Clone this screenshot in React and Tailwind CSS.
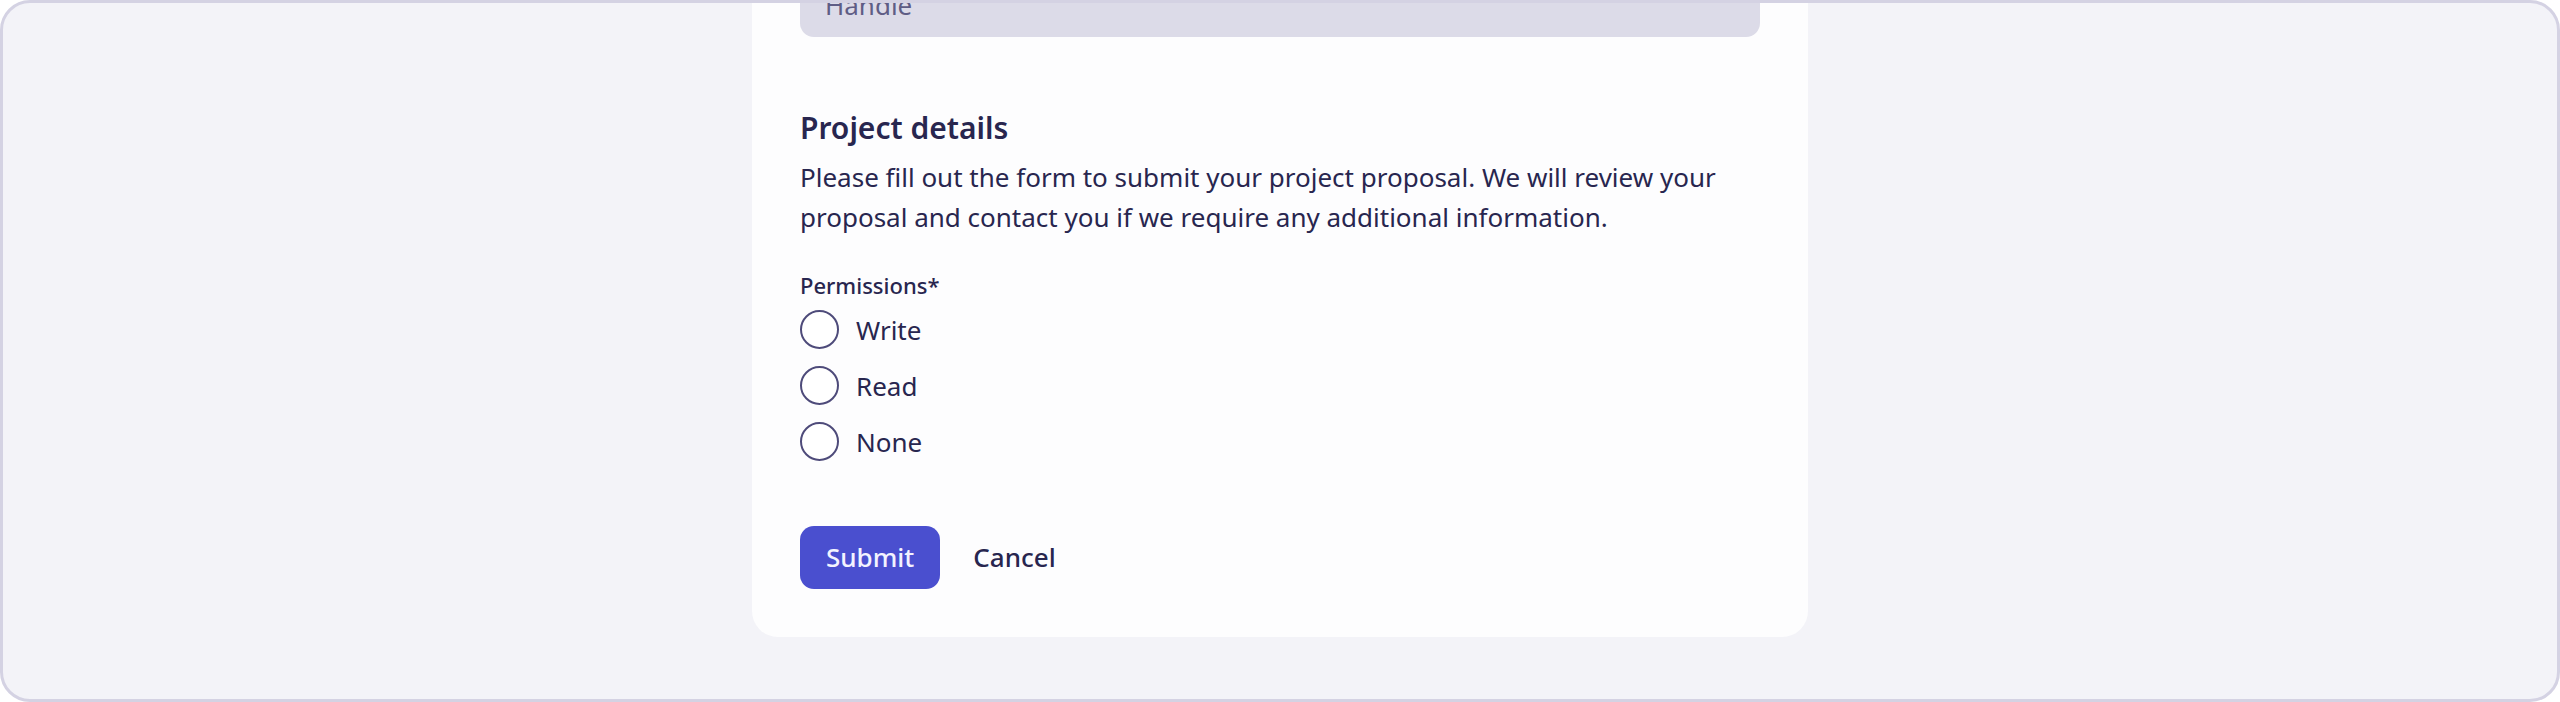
import React, { useState } from "react";

const options = ["Write", "Read", "None"];

function Radio({ label, checked, onChange }) {
  return (
    <label className="flex items-center gap-[17px] cursor-pointer h-[39px]">
      <span className="w-[39px] h-[39px] rounded-full border-2 border-[#4e4b7a] flex items-center justify-center bg-white">
        {checked && <span className="w-[19px] h-[19px] rounded-full bg-[#4a4fcf]" />}
      </span>
      <input type="radio" className="hidden" checked={checked} onChange={onChange} />
      <span className="text-[26px] leading-[40px] text-[#28264f]">{label}</span>
    </label>
  );
}

export default function App() {
  const [perm, setPerm] = useState("");

  return (
    <div
      className="w-full h-[702px] bg-[#f3f3f8] border-[3px] border-[#d4d2e3] rounded-[30px] overflow-hidden flex flex-col items-center justify-end pb-[62px]"
      style={{ fontFamily: '"Noto Sans", "Open Sans", sans-serif' }}
    >
      <div className="w-[1056px] shrink-0 bg-[#fdfdfe] rounded-[26px] px-12 pb-12 pt-12">
        {/* profile section, mostly scrolled out of view */}
        <div className="flex flex-col gap-3">
          <span className="text-[22px] leading-[32px] font-medium text-[#28264f]">Handle*</span>
          <div className="h-[64px] rounded-[14px] bg-[#dcdbe8] px-[25px] flex items-center">
            <span className="text-[26px] leading-[40px] text-[#5f5d85]">Handle</span>
          </div>
        </div>

        <h2 className="mt-[71px] text-[30px] leading-[40px] font-semibold text-[#28264f]">
          Project details
        </h2>
        <p className="mt-[9px] text-[26px] leading-[40px] text-[#28264f]">
          Please fill out the form to submit your project proposal. We will review your proposal
          and contact you if we require any additional information.
        </p>

        <div className="mt-8 text-[22px] leading-[32px] font-medium text-[#28264f]">Permissions*</div>
        <div className="mt-[9px] flex flex-col gap-[17px]">
          {options.map((o) => (
            <Radio key={o} label={o} checked={perm === o} onChange={() => setPerm(o)} />
          ))}
        </div>

        <div className="mt-[65px] flex items-center gap-[33px]">
          <button className="h-[63px] px-[26px] rounded-[14px] bg-[#4a4fcf] text-[#f3f3ff] text-[26px] font-medium">
            Submit
          </button>
          <button className="text-[26px] font-medium text-[#28264f]">Cancel</button>
        </div>
      </div>
    </div>
  );
}
